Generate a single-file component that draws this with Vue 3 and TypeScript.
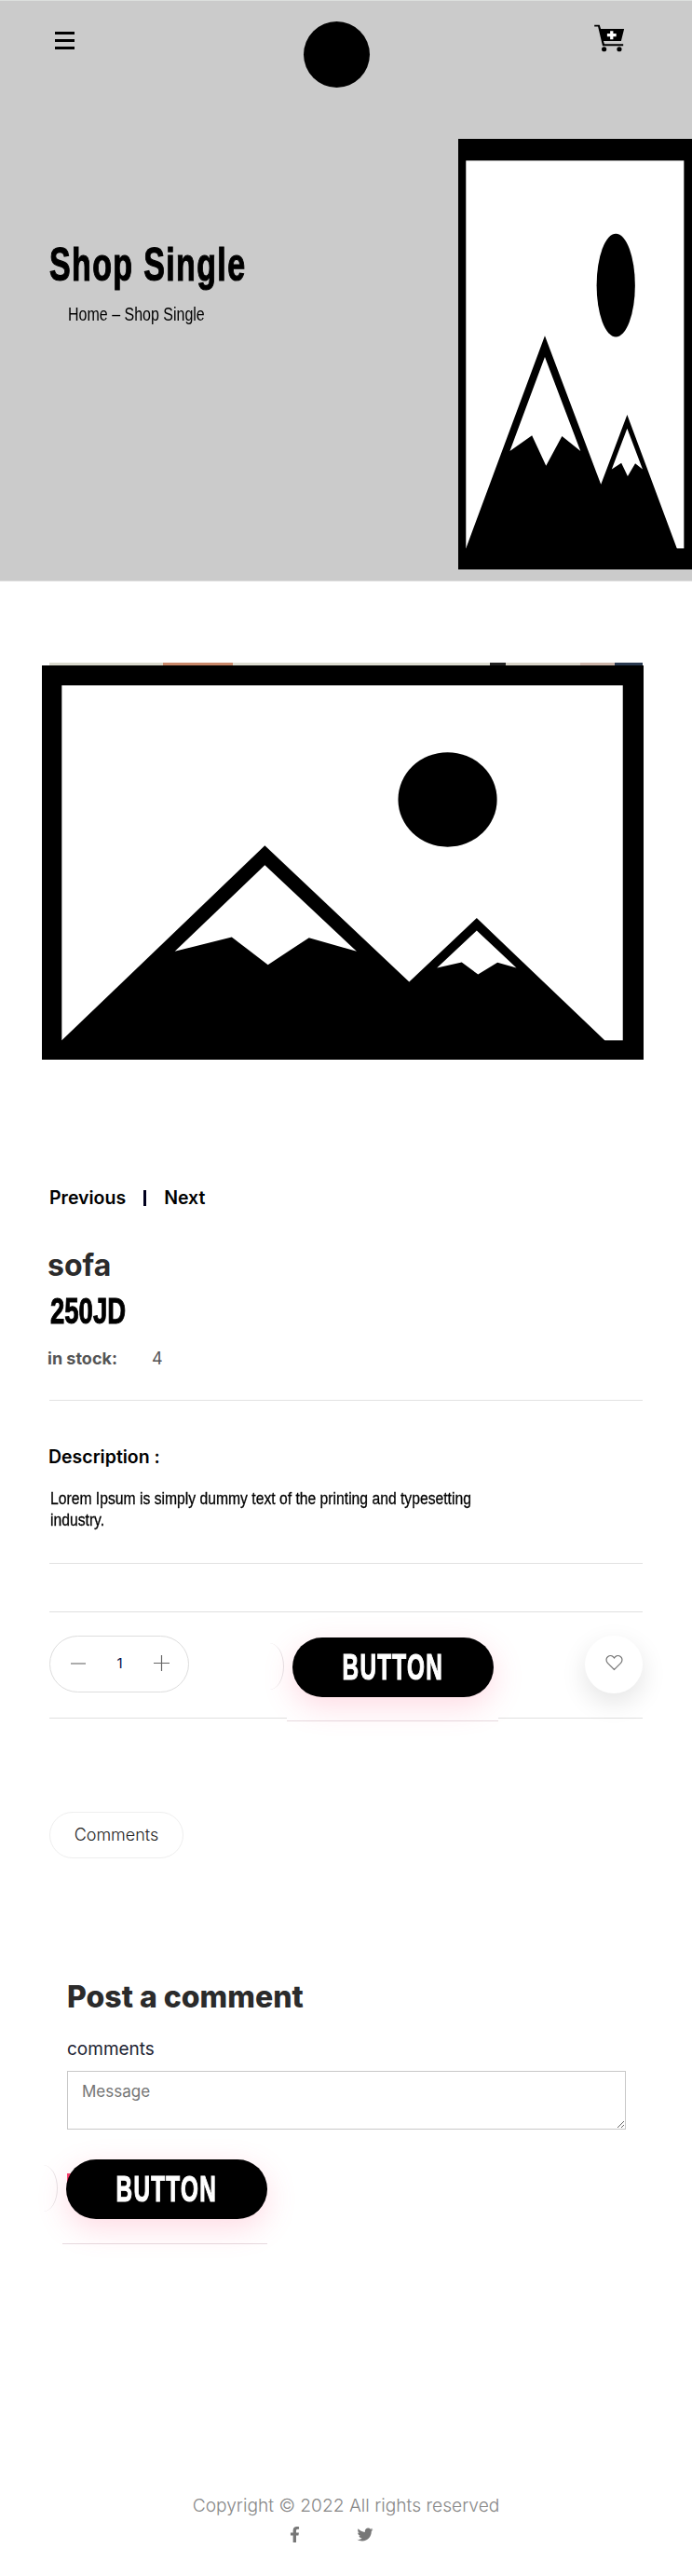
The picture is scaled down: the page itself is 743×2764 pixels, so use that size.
<script setup lang="ts">
const frame = { x: 95, y: 73, w: 1363, h: 1267 }
const viewBox = `${frame.x} ${frame.y} ${frame.w} ${frame.h}`
const ridge = '140,1290 140,1278 600,652 927,1090 1080,885 1370,1278 1370,1290'
const snowBig = '600,715 808,992 700,948 607,1035 525,946 396,992'
const snowSmall = '1080,925 1170,1045 1127,1028 1083,1066 1046,1027 990,1045'
</script>

<template>
  <div class="page">
    <section class="hero">
      <header class="topbar">
        <div class="burger" aria-label="menu"><i></i><i></i><i></i></div>
        <div class="logo"></div>
        <svg class="cart" viewBox="84 78 100 92" aria-label="cart">
          <path d="M84 80h17l4 13h77l-10 40h-58l3 10h62v6H111L96 86H84z" fill="#000" />
          <circle cx="116" cy="160" r="8" fill="#000" />
          <circle cx="166" cy="160" r="8" fill="#000" />
          <path d="M136 100h10v9h10v10h-10v9h-10v-9h-10v-10h10z" fill="#fff" />
        </svg>
      </header>
      <div class="hero-body">
        <div class="hero-text">
          <h1 class="hero-title"><span>Shop Single</span></h1>
          <p class="crumb"><span>Home – Shop Single</span></p>
        </div>
        <svg class="hero-picture" :viewBox="viewBox" preserveAspectRatio="none">
          <rect :x="frame.x" :y="frame.y" :width="frame.w" :height="frame.h" fill="#000" />
          <rect x="140" y="137" width="1271" height="1141" fill="#fff" />
          <ellipse cx="1014" cy="504" rx="112" ry="152" fill="#000" />
          <polygon :points="ridge" fill="#000" />
          <polygon :points="snowBig" fill="#fff" />
          <polygon :points="snowSmall" fill="#fff" />
        </svg>
      </div>
    </section>

    <div class="strip"></div>
    <svg class="main-picture" :viewBox="viewBox" preserveAspectRatio="none">
      <rect :x="frame.x" :y="frame.y" :width="frame.w" :height="frame.h" fill="#000" />
      <rect x="140" y="137" width="1271" height="1141" fill="#fff" />
      <ellipse cx="1014" cy="504" rx="112" ry="152" fill="#000" />
      <polygon :points="ridge" fill="#000" />
      <polygon :points="snowBig" fill="#fff" />
      <polygon :points="snowSmall" fill="#fff" />
    </svg>

    <main class="product">
      <nav class="pager">
        <a>Previous</a><span class="pager-bar"></span><a>Next</a>
      </nav>
      <h2 class="name">sofa</h2>
      <p class="price"><span>250JD</span></p>
      <p class="stock"><b>in stock:</b><span>4</span></p>
      <hr class="rule first" />
      <h3 class="desc-title">Description :</h3>
      <p class="desc">Lorem Ipsum is simply dummy text of the printing and typesetting industry.</p>
      <hr class="rule second" />

      <div class="buy-row">
        <div class="qty">
          <svg width="16" height="2" viewBox="0 0 16 2"><path d="M0 1h16" stroke="#888" stroke-width="1.4" /></svg>
          <span class="qty-value">1</span>
          <svg width="17" height="17" viewBox="0 0 17 17"><path d="M0 8.5h17M8.5 0v17" stroke="#666" stroke-width="1.2" /></svg>
        </div>
        <div class="cta-wrap cta-one">
          <button class="cta"><span>BUTTON</span></button>
        </div>
        <div class="wish">
          <svg width="19" height="18" viewBox="0 0 19 18">
            <path d="M9.5 16.5 2.4 9.3C.4 7.2.7 4 2.8 2.4c1.9-1.4 4.6-1 6 .8l.7.9.7-.9c1.4-1.8 4.1-2.2 6-.8 2.1 1.6 2.4 4.8.4 6.9z" fill="none" stroke="#777" stroke-width="1.2" />
          </svg>
        </div>
      </div>

      <div class="tab">Comments</div>

      <section class="post">
        <h2 class="post-title">Post a comment</h2>
        <label class="post-label" for="message">comments</label>
        <textarea id="message" class="post-input" placeholder="Message"></textarea>
        <div class="cta-wrap cta-two">
          <i class="pink"></i>
          <button class="cta"><span>BUTTON</span></button>
        </div>
      </section>
    </main>

    <footer class="footer">
      <p class="copy">Copyright © 2022 All rights reserved</p>
      <div class="social">
        <svg width="11" height="17" viewBox="0 0 320 512"><path fill="#777" d="M279.14 288l14.22-92.66h-88.91v-60.13c0-25.35 12.42-50.06 52.24-50.06h40.42V6.26S260.43 0 225.36 0c-73.22 0-121.08 44.38-121.08 124.72v70.62H22.89V288h81.39v224h100.17V288z" /></svg>
        <svg width="18" height="17" viewBox="0 0 512 512"><path fill="#777" d="M459.37 151.716c.325 4.548.325 9.097.325 13.645 0 138.72-105.583 298.558-298.558 298.558-59.452 0-114.68-17.219-161.137-47.106 8.447.974 16.568 1.299 25.34 1.299 49.055 0 94.213-16.568 130.274-44.832-46.132-.975-84.792-31.188-98.112-72.772 6.498.974 12.995 1.624 19.818 1.624 9.421 0 18.843-1.3 27.614-3.573-48.081-9.747-84.143-51.98-84.143-102.985v-1.299c13.969 7.797 30.214 12.67 47.431 13.319-28.264-18.843-46.781-51.005-46.781-87.391 0-19.492 5.197-37.36 14.294-52.954 51.655 63.675 129.3 105.258 216.365 109.807-1.624-7.797-2.599-15.918-2.599-24.04 0-57.828 46.782-104.934 104.934-104.934 30.213 0 57.502 12.67 76.67 33.137 23.715-4.548 46.456-13.32 66.599-25.34-7.798 24.366-24.366 44.833-46.132 57.827 21.117-2.273 41.584-8.122 60.426-16.243-14.292 20.791-32.161 39.308-52.628 54.253z" /></svg>
      </div>
    </footer>
  </div>
</template>

<style scoped>
.page {
  width: 743px;
  min-height: 2764px;
  background: #fff;
  font-family: Inter, "Noto Sans", sans-serif;
  overflow: hidden;
}
h1, h2, h3, p { margin: 0; }

.hero {
  height: 624px;
  box-sizing: border-box;
  background: #cbcbcb;
  padding-top: 22px;
  border-top: 1px solid #dde0de;
  border-bottom: 1px solid #e4e4e4;
}
.topbar {
  display: grid;
  grid-template-columns: 267px 71px 1fr;
  padding-left: 59px;
  height: 71px;
  align-items: start;
}
.burger { display: flex; flex-direction: column; gap: 5px; width: 21px; margin-top: 11px; }
.burger i { display: block; height: 3px; background: #000; }
.logo { width: 71px; height: 71px; border-radius: 50%; background: #000; }
.cart { width: 33px; height: 30px; justify-self: end; margin: 3px 72px 0 0; }

.hero-body {
  display: flex;
  justify-content: space-between;
  margin-top: 55px;
}
.hero-text { padding: 105px 0 0 53px; }
.hero-title {
  font: 700 50px/60px "Liberation Sans", sans-serif;
  letter-spacing: 2px;
  -webkit-text-stroke: 1.2px #000;
  color: #000;
  white-space: nowrap;
}
.hero-title span { display: inline-block; transform: scaleX(0.68); transform-origin: left; }
.crumb {
  margin: 11px 0 0 20px;
  font: 400 20px/24px "Liberation Sans", sans-serif;
  color: #000;
  white-space: nowrap;
}
.crumb span { display: inline-block; transform: scaleX(0.8); transform-origin: left; }
.hero-picture { display: block; width: 251px; height: 462px; filter: blur(0.5px); }

.strip {
  width: 637px;
  height: 3px;
  margin: 87px 0 0 53px;
  background: linear-gradient(90deg,
    #d9d9cd 0 122px, #c8886a 122px 197px, #dcdcd0 197px 473px,
    #222 473px 490px, #d8d4c8 490px 570px, #cbb4a8 570px 607px, #2a3a50 607px);
}
.main-picture { display: block; width: 646px; height: 423px; margin-left: 45px; filter: blur(0.5px); }

.product { padding: 0 53px; }
.pager {
  display: flex;
  align-items: center;
  margin-top: 136px;
  font: 600 19.5px/24px Inter, sans-serif;
  color: #000;
}
.pager-bar { width: 3px; height: 17px; background: #00001e; margin: 0 19px 0 19px; }
.name {
  margin: 41px 0 0 -2px;
  font: 700 32px/40px Inter, sans-serif;
  color: #2b2b2b;
}
.price {
  margin: 6px 0 0 1px;
  font: 700 38px/46px "Liberation Sans", sans-serif;
  -webkit-text-stroke: 1px #000;
  color: #000;
}
.price span { display: inline-block; transform: scaleX(0.724); transform-origin: left; }
.stock {
  display: flex;
  margin: 16px 0 0 -2px;
  font: 400 18px/24px Inter, sans-serif;
  color: #555;
}
.stock b { width: 112px; font-weight: 700; }
.rule { margin: 0; border: 0; border-top: 1px solid #e2e2e2; }
.rule.first { margin-top: 32px; }
.desc-title {
  margin: 48px 0 0 -1px;
  font: 600 19.5px/24px Inter, sans-serif;
  color: #000;
}
.desc {
  width: 540px;
  margin: 22px 0 0 1px;
  font: 400 18px/23px "Liberation Sans", sans-serif;
  -webkit-text-stroke: 0.3px #000;
  color: #000;
  transform: scaleX(0.872);
  transform-origin: left top;
}
.rule.second { margin-top: 34px; }

.buy-row {
  display: flex;
  justify-content: space-between;
  align-items: flex-start;
  margin-top: 51px;
  height: 115px;
  box-sizing: border-box;
  padding-top: 25px;
  border-top: 1px solid #e0e0e0;
  border-bottom: 1px solid #e0e0e0;
}
.qty {
  display: flex;
  align-items: center;
  justify-content: space-between;
  width: 150px;
  height: 61px;
  box-sizing: border-box;
  padding: 0 20px 2px 22px;
  border: 1px solid #ddd;
  border-radius: 31px;
}
.qty-value { font: 400 15px/20px Inter, sans-serif; color: #00104a; }

.cta-wrap { position: relative; z-index: 1; width: 216px; height: 64px; }
.cta-one { margin: 2px 0 0 13px; }
.cta {
  display: flex;
  align-items: center;
  justify-content: center;
  width: 100%;
  height: 100%;
  padding: 0;
  border: 0;
  border-radius: 32px;
  background: #000;
  color: #fff;
  box-shadow: 0 10px 32px rgba(255, 90, 130, 0.22);
  font: 700 38px/1 "Liberation Sans", sans-serif;
  letter-spacing: 2px;
  -webkit-text-stroke: 1.2px #fff;
}
.cta span { display: inline-block; transform: scaleX(0.64); }
.cta-wrap::before {
  content: "";
  position: absolute;
  top: 6px;
  left: -40px;
  width: 30px;
  height: 50px;
  border-right: 1px solid #e4dcdf;
  border-radius: 50%;
}
.cta-wrap::after {
  content: "";
  position: absolute;
  z-index: -1;
  top: 83px;
  left: -6px;
  right: -5px;
  height: 6px;
  background: #fff;
  border-bottom: 1px solid #e6dadf;
}
.pink {
  position: absolute;
  z-index: -1;
  top: 15px;
  left: 1px;
  width: 9px;
  height: 14px;
  background: #f4416c;
}

.wish {
  display: flex;
  align-items: center;
  justify-content: center;
  width: 62px;
  height: 62px;
  padding-bottom: 4px;
  box-sizing: border-box;
  border-radius: 50%;
  background: #fff;
  box-shadow: 0 10px 28px rgba(0, 0, 0, 0.11);
}

.tab {
  display: flex;
  align-items: center;
  justify-content: center;
  width: 144px;
  height: 50px;
  box-sizing: border-box;
  margin-top: 100px;
  border: 1px solid #eee;
  border-radius: 25px;
  font: 300 18px/24px Inter, sans-serif;
  color: #222;
}

.post { padding: 0 19px; }
.post-title {
  margin-top: 127px;
  font: 800 32px/44px Inter, sans-serif;
  color: #2b2b2b;
}
.post-label {
  display: block;
  margin-top: 21px;
  font: 400 19px/26px Inter, sans-serif;
  color: #1d2433;
}
.post-input {
  display: block;
  width: 600px;
  height: 63px;
  box-sizing: border-box;
  margin-top: 10px;
  padding: 9px 15px;
  border: 1px solid #c8c8c8;
  border-radius: 0;
  background: #fff;
  font: 400 17px/24px Inter, sans-serif;
  outline: none;
}
.post-input::placeholder { color: #757575; opacity: 1; }
.cta-two { margin: 32px 0 0 -1px; }
.cta-two::after { top: 89px; height: 1px; left: -4px; right: 0; background: none; }

.footer { margin-top: 292px; }
.copy {
  text-align: center;
  font: 300 19.2px/30px Inter, sans-serif;
  color: #888;
}
.social {
  display: flex;
  align-items: center;
  gap: 61px;
  padding-left: 311px;
  margin-top: 8px;
}
</style>
